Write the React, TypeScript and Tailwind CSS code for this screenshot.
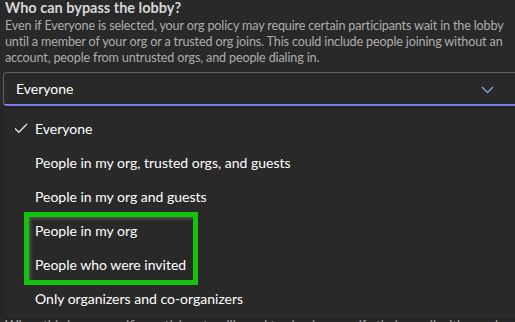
import React from "react";

const font = { fontFamily: 'Lato, "Noto Sans", sans-serif' };

const items = [
  "Everyone",
  "People in my org, trusted orgs, and guests",
  "People in my org and guests",
  "People in my org",
  "People who were invited",
  "Only organizers and co-organizers",
];

export default function App() {
  return (
    <div className="relative w-[515px] h-[322px] overflow-hidden bg-[#292929]" style={font}>
      <div className="pl-[5px] pr-2">
        <div className="h-[18px] text-[14.5px] font-bold leading-[18px] text-[#d6d6d6] -mt-[1px] whitespace-nowrap">Who can bypass the lobby?</div>
        <p className="h-[48px] mt-[1px] text-[12.6px] leading-[16px] text-[#adadad] whitespace-nowrap tracking-[-0.15px]">
          Even if Everyone is selected, your org policy may require certain participants wait in the lobby
          <br />
          until a member of your org or a trusted org joins. This could include people joining without an
          <br />
          account, people from untrusted orgs, and people dialing in.
        </p>
      </div>
      <div className="relative ml-[3px] mt-[6px] h-[34px] w-[520px] rounded-[4px] border border-[#616161] border-b-2 border-b-[#7f85f5] flex items-center pl-[12px] text-[14px] text-white">
        Everyone
        <svg className="absolute left-[477px] top-[13px]" width="13" height="8" viewBox="0 0 13 8">
          <path d="M1 1 L6.5 6.5 L12 1" fill="none" stroke="#8ab4e8" strokeWidth="1.2" />
        </svg>
      </div>
      <div className="mt-[211px] pl-[5px] text-[13px] leading-[16px] text-[#adadad] whitespace-nowrap">
        When this is on, specific participants will need to sign in or verify their email with a code.
      </div>
      <div className="absolute left-[3px] top-[108px] w-[520px] h-[210px] bg-[#292929] shadow-[0_0_4px_rgba(0,0,0,0.5)] pt-[3px]">
        {items.map((t, i) => (
          <div key={t} className="h-[34px] flex items-center text-[14px] text-white whitespace-nowrap">
            <div className="w-[32px] flex justify-end pr-[7px]">
              {i === 0 && (
                <svg width="14" height="11" viewBox="0 0 14 11">
                  <path d="M1 5.5 L4.8 9.3 L13 1" fill="none" stroke="#e6e6e6" strokeWidth="1.3" />
                </svg>
              )}
            </div>
            <span>{t}</span>
          </div>
        ))}
      </div>
      <div className="absolute left-[24px] top-[212px] w-[174px] h-[73px] border-[5px] border-[#12c50c] shadow-[inset_2px_2px_3px_rgba(110,110,110,0.6)]" />
    </div>
  );
}
